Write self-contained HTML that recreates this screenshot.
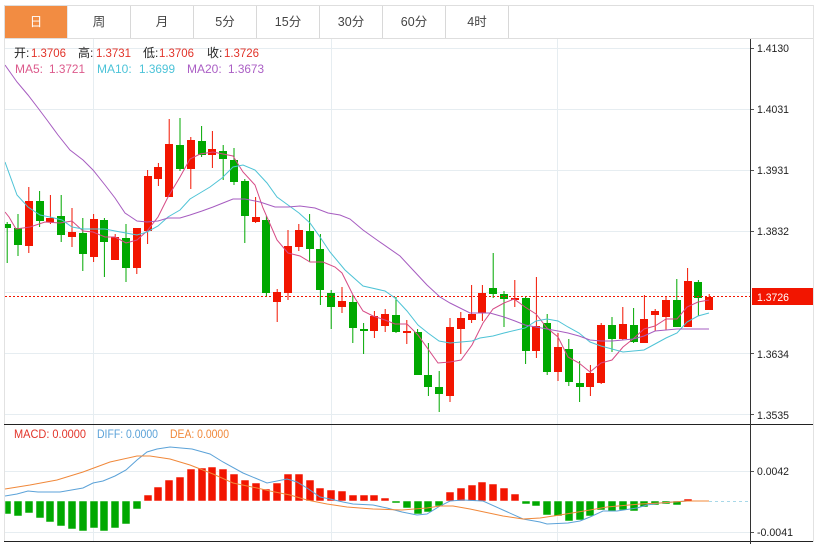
<!DOCTYPE html>
<html>
<head>
<meta charset="utf-8">
<style>
html,body{margin:0;padding:0;background:#fff;}
body{width:820px;height:544px;overflow:hidden;position:relative;font-family:"Liberation Sans","Noto Sans CJK SC",sans-serif;}
#tabs{position:absolute;left:4px;top:5px;width:810px;height:34px;box-sizing:border-box;border:1px solid #dedede;display:flex;}
#tabs div{width:63px;height:32px;box-sizing:border-box;border-right:1px solid #d8d8d8;text-align:center;line-height:32px;font-size:12.5px;color:#444;flex:none;}
#tabs div.on{background:#f28c42;color:#fff;border-right:1px solid #e8e8e8;}
svg{position:absolute;left:0;top:0;}
text{font-family:"Liberation Sans","Noto Sans CJK SC",sans-serif;}
</style>
</head>
<body>
<div id="tabs"><div class="on">日</div><div>周</div><div>月</div><div>5分</div><div>15分</div><div>30分</div><div>60分</div><div>4时</div></div>
<svg width="820" height="544" viewBox="0 0 820 544">
<defs><clipPath id="c"><rect x="5" y="39" width="745" height="503"/></clipPath></defs>
<!-- frame -->
<path d="M4.5 38V542M813.5 5V542" stroke="#e2e2e2" fill="none"/>
<!-- grid -->
<path d="M5 48.5H750M5 109.5H750M5 170.5H750M5 231.5H750M5 292.5H750M5 353.5H750M5 414.5H750M5 471.5H750M5 532.5H750M93.5 39V542M331.5 39V542M557.5 39V542" stroke="#e6edf1" fill="none"/>
<g clip-path="url(#c)">
<!-- wicks -->
<path fill="none" stroke="#00a800" d="M7.2 222V263M18 214V256M39.6 191V227M61.2 195V242M82.8 218V271M104.4 218V277M126 224V282M180 118V171M201.6 126V157M223.2 145V180M234 148V185M244.8 179V243M266.4 216V297M309.6 214V262M320.4 234V305M331.2 290V329M352.8 295V343M363.6 323V354M396 297V333M417.6 329V375M428.4 343V396M439.2 371V412M493.2 253V298M504 291V327M525.6 297V364M547.2 314V375M568.8 339V386M579.6 361V402M612 317V352M633.6 308V343M676.8 279V327M698.4 280V316"/>
<path fill="none" stroke="#f21500" d="M28.8 187V253M50.4 195V224M72 208V247M93.6 214V262M115.2 234V260M136.8 228V274M147.6 170V244M158.4 163V186M169.2 119V197M190.8 137V189M212.4 131V168M255.6 197V223M277.2 289V322M288 230V300M298.8 224V251M342 287V313M374.4 311V338M385.2 309V332M406.8 320V344M450 318V402M460.8 312V354M471.6 285V323M482.4 285V321M514.8 280V307M536.4 277V358M558 333V381M590.4 365V396M601.2 323V384M622.8 307V340M644.4 295V343M655.2 309V331M666 296V330M687.6 268V327M709.2 294V310"/>
<!-- candle bodies -->
<path fill="#00a800" d="M3 224h8v4h-8zM14 228h8v17h-8zM36 201h8v20h-8zM57 216h8v19h-8zM79 233h8v21h-8zM100 220h8v22h-8zM122 238h8v30h-8zM176 145h8v24h-8zM198 141h8v14h-8zM219 151h8v8h-8zM230 160h8v22h-8zM241 181h8v35h-8zM262 220h8v73h-8zM306 231h8v18h-8zM316 249h8v41h-8zM327 293h8v14h-8zM349 302h8v26h-8zM360 329h8v2h-8zM392 315h8v17h-8zM414 332h8v43h-8zM424 375h8v12h-8zM435 387h8v7h-8zM489 288h8v6h-8zM500 294h8v5h-8zM522 298h8v53h-8zM543 323h8v49h-8zM565 349h8v33h-8zM576 383h8v4h-8zM608 325h8v14h-8zM630 325h8v17h-8zM673 300h8v27h-8zM694 282h8v16h-8z"/>
<path fill="#f21500" d="M25 201h8v45h-8zM46 218h8v4h-8zM68 232h8v5h-8zM90 219h8v38h-8zM111 237h8v23h-8zM133 228h8v40h-8zM144 176h8v55h-8zM154 167h8v12h-8zM165 144h8v53h-8zM187 140h8v29h-8zM208 149h8v6h-8zM252 217h8v5h-8zM273 292h8v10h-8zM284 246h8v47h-8zM295 230h8v17h-8zM338 301h8v6h-8zM370 316h8v15h-8zM381 314h8v12h-8zM403 331h8v2h-8zM446 327h8v69h-8zM457 318h8v11h-8zM468 314h8v6h-8zM478 293h8v20h-8zM511 298h8v2h-8zM532 326h8v25h-8zM554 347h8v25h-8zM586 373h8v14h-8zM597 325h8v58h-8zM619 324h8v15h-8zM640 319h8v24h-8zM651 311h8v4h-8zM662 300h8v17h-8zM684 281h8v46h-8zM705 297h8v13h-8z"/>
<!-- current price line -->
<path d="M5 296.5H750" stroke="#f21500" stroke-dasharray="2 2" fill="none"/>
<!-- MA lines -->
<polyline fill="none" stroke="#d64a85" points="5,212 9,217 16,229 30,227 45,222 60,223 72,221 83,231 93,232 105,237 115,237 126,243 137,240 147,231 158,217 168,197 180,177 190,159 200,154 213,152 233,156 243,172 255,185 263,208 277,240 288,253 300,256 310,262 323,262 335,267 342,273 353,295 363,311 373,316 385,320 395,324 407,324 418,335 438,363 450,362 461,360 472,345 483,323 493,309 504,303 514,299 525,307 536,314 547,328 558,337 568,357 579,363 590,372 601,363 612,360 623,347 633,339 644,329 655,326 666,319 677,319 687,307 698,302 709,300"/>
<polyline fill="none" stroke="#4ec3d6" points="5,162 17,195 28,207 40,215 50,217 62,220 72,227 83,229 93,229 105,229 115,231 126,233 137,235 147,232 158,226 168,217 180,210 190,199 200,193 210,187 222,178 233,167 243,165 255,170 267,183 277,197 288,205 299,213 310,223 320,237 330,252 345,270 363,286 385,291 395,298 407,311 418,325 428,333 439,341 450,343 461,342 472,341 480,338 493,336 504,333 525,328 536,321 547,319 558,321 568,327 579,333 590,342 601,346 623,352 644,350 655,344 666,338 677,333 687,322 698,316 709,313"/>
<polyline fill="none" stroke="#a65cc0" points="5,65 17,82 28,95 38,108 47,120 58,135 70,150 83,160 93,170 105,185 115,198 125,213 137,221 147,222 158,221 168,218 180,218 190,215 202,211 213,207 223,203 233,199 245,199 260,202 275,207 288,207 300,206 315,208 328,213 340,215 350,219 363,230 377,240 400,256 413,270 427,285 440,297 450,303 470,313 490,313 504,317 515,321 525,325 536,327 558,331 568,333 579,336 590,340 601,341 612,341 623,340 633,339 644,336 655,331 666,330 677,329 687,329 709,329"/>
<!-- MACD -->
<path d="M709 501.5H750" stroke="#a8d8e8" stroke-dasharray="3 3" fill="none"/>
<path fill="#00a800" stroke="#fff" stroke-width=".5" d="M5 501h6v13h-6zM14 501h8v15h-8zM25 501h8v12h-8zM36 501h8v17h-8zM46 501h8v21h-8zM57 501h8v25h-8zM68 501h8v28h-8zM79 501h8v30h-8zM90 501h8v27h-8zM100 501h8v30h-8zM111 501h8v27h-8zM122 501h8v23h-8zM133 501h8v8h-8zM392 501h8v2h-8zM403 501h8v7h-8zM414 501h8v13h-8zM424 501h8v11h-8zM435 501h8v5h-8zM522 501h8v3h-8zM532 501h8v5h-8zM543 501h8v14h-8zM554 501h8v15h-8zM565 501h8v20h-8zM576 501h8v19h-8zM586 501h8v15h-8zM597 501h8v9h-8zM608 501h8v10h-8zM619 501h8v9h-8zM630 501h8v10h-8zM640 501h8v6h-8zM651 501h8v4h-8zM662 501h8v3h-8zM673 501h8v4h-8z"/>
<path fill="#f21500" stroke="#fff" stroke-width=".5" d="M144 495h8v6h-8zM154 487h8v14h-8zM165 480h8v21h-8zM176 477h8v24h-8zM187 469h8v32h-8zM198 468h8v33h-8zM208 467h8v34h-8zM219 469h8v32h-8zM230 474h8v27h-8zM241 480h8v21h-8zM252 483h8v18h-8zM262 489h8v12h-8zM273 483h8v18h-8zM284 474h8v27h-8zM295 474h8v27h-8zM306 480h8v21h-8zM316 488h8v13h-8zM327 490h8v11h-8zM338 491h8v10h-8zM349 495h8v6h-8zM360 495h8v6h-8zM370 495h8v6h-8zM381 498h8v3h-8zM446 492h8v9h-8zM457 488h8v13h-8zM468 485h8v16h-8zM478 482h8v19h-8zM489 484h8v17h-8zM500 488h8v13h-8zM511 494h8v7h-8zM684 499h8v2h-8z"/>
<polyline fill="none" stroke="#5ba2d8" points="5,496 17,494 28,491 38,492 60,492 83,488 93,483 103,481 115,476 126,470 137,460 147,452 157,449 170,447 192,449 210,454 223,462 243,473 267,483 287,479 297,482 307,488 320,497 330,499 343,502 353,504 373,505 387,508 402,512 417,515 427,514 440,506 450,501 463,500 483,501 503,510 523,519 540,522 547,524 568,523 580,521 590,517 603,511 617,511 637,508 647,505 660,503 673,502 687,501 709,501"/>
<polyline fill="none" stroke="#f0883a" points="5,489 30,485 57,480 83,472 110,462 137,456 150,456 170,459 190,465 213,474 233,483 257,488 270,491 290,495 307,500 327,504 347,507 373,509 402,510 427,508 440,506 453,506 470,509 503,516 523,519 540,518 560,515 590,510 607,507 640,504 660,503 687,501 709,501"/>
</g>
<!-- axes -->
<path d="M4 424.5H813M4 541.5H813" stroke="#222" fill="none"/>
<path d="M750.5 39V544" stroke="#333" fill="none"/>
<path d="M751 48.5h3M751 109.5h3M751 170.5h3M751 231.5h3M751 353.5h3M751 414.5h3M751 471.5h3M751 532.5h3" stroke="#555" fill="none"/>
<rect x="752" y="288" width="61" height="17" fill="#f21500"/>
<g font-size="11" fill="#222" lengthAdjust="spacingAndGlyphs">
<text x="757" y="52" textLength="32" lengthAdjust="spacingAndGlyphs">1.4130</text>
<text x="757" y="113" textLength="32" lengthAdjust="spacingAndGlyphs">1.4031</text>
<text x="757" y="174" textLength="32" lengthAdjust="spacingAndGlyphs">1.3931</text>
<text x="757" y="235" textLength="32" lengthAdjust="spacingAndGlyphs">1.3832</text>
<text x="757" y="358" textLength="32" lengthAdjust="spacingAndGlyphs">1.3634</text>
<text x="757" y="419" textLength="32" lengthAdjust="spacingAndGlyphs">1.3535</text>
<text x="757" y="475" textLength="32" lengthAdjust="spacingAndGlyphs">0.0042</text>
<text x="757" y="536" textLength="36" lengthAdjust="spacingAndGlyphs">-0.0041</text>
</g>
<text x="757" y="301" font-size="11" fill="#fff" textLength="32" lengthAdjust="spacingAndGlyphs">1.3726</text>
<!-- legends -->
<g font-size="12" fill="#e2342a">
<text x="14" y="57" fill="#222">开:</text><text x="31" y="57" textLength="35" lengthAdjust="spacingAndGlyphs">1.3706</text>
<text x="78" y="57" fill="#222">高:</text><text x="96" y="57" textLength="35" lengthAdjust="spacingAndGlyphs">1.3731</text>
<text x="143" y="57" fill="#222">低:</text><text x="159" y="57" textLength="35" lengthAdjust="spacingAndGlyphs">1.3706</text>
<text x="207" y="57" fill="#222">收:</text><text x="224" y="57" textLength="35" lengthAdjust="spacingAndGlyphs">1.3726</text>
</g>
<g font-size="12">
<text x="15" y="73" fill="#dc5a8c">MA5:</text><text x="49" y="73" fill="#dc5a8c" textLength="36" lengthAdjust="spacingAndGlyphs">1.3721</text>
<text x="97" y="73" fill="#4cc3d8">MA10:</text><text x="139" y="73" fill="#4cc3d8" textLength="36" lengthAdjust="spacingAndGlyphs">1.3699</text>
<text x="187" y="73" fill="#ab5fc5">MA20:</text><text x="228" y="73" fill="#ab5fc5" textLength="36" lengthAdjust="spacingAndGlyphs">1.3673</text>
</g>
<g font-size="11.5">
<text x="14" y="438" fill="#e2342a" textLength="72" lengthAdjust="spacingAndGlyphs">MACD: 0.0000</text>
<text x="97" y="438" fill="#5ba2d8" textLength="61" lengthAdjust="spacingAndGlyphs">DIFF: 0.0000</text>
<text x="170" y="438" fill="#f0883a" textLength="59" lengthAdjust="spacingAndGlyphs">DEA: 0.0000</text>
</g>
</svg>
</body>
</html>
